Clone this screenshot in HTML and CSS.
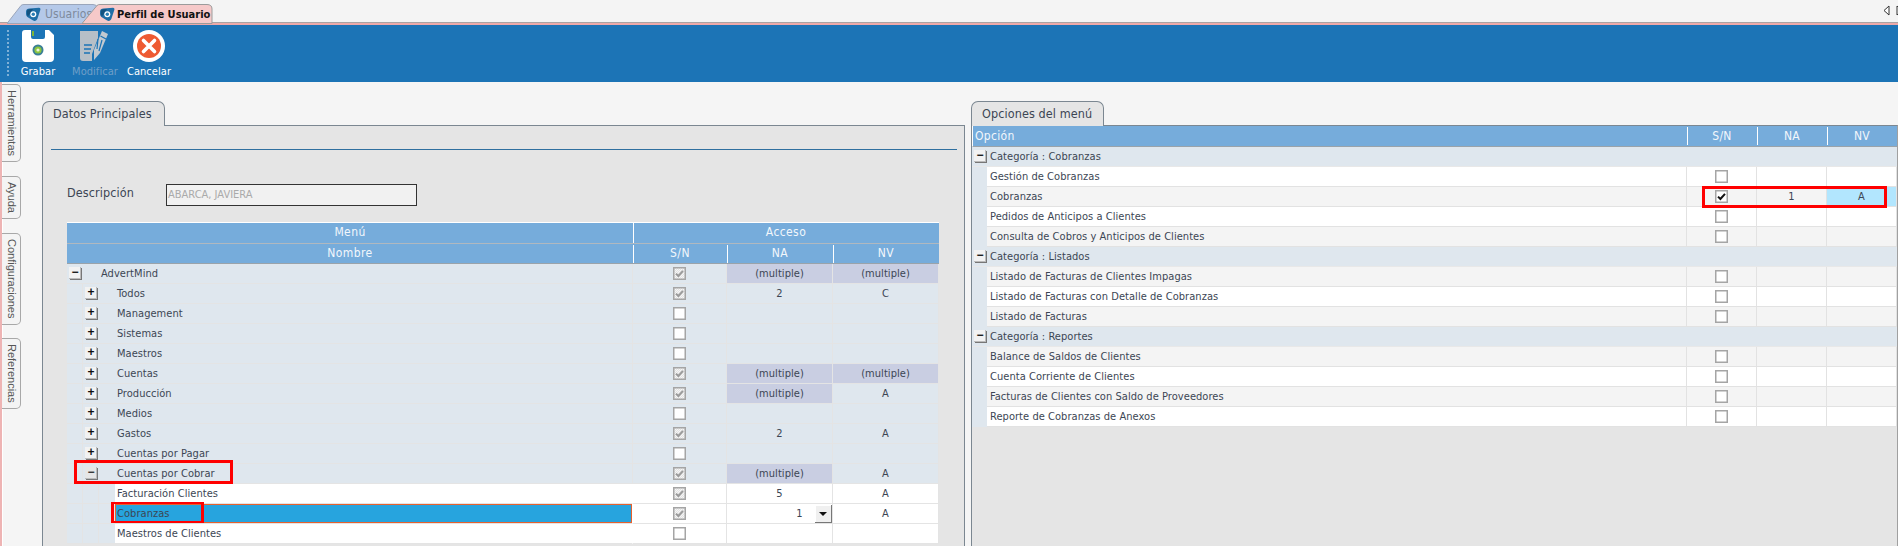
FILE: index.html
```html
<!DOCTYPE html>
<html lang="es">
<head>
<meta charset="utf-8">
<title>Perfil de Usuario</title>
<link rel="stylesheet" href="styles.css">
</head>
<body>
<svg class="defs" width="0" height="0" aria-hidden="true">
  <defs>
    <symbol id="logo" viewBox="0 0 16 15">
      <path d="M1 4.5C1 2.5 2.5 1.5 4.5 1.5L14 .8C15.2.8 15.8 1.8 15.3 3L12.5 11.5C11.8 13.6 10 14.6 8.2 13.6L2.8 10.2C1.6 9.4 1 8.2 1 6.8Z" fill="#1f6ea6"/>
      <path d="M2 4.5C2 3 3 2.3 4.5 2.2L8 2 3 9.5C2.3 9 2 8 2 6.8Z" fill="#13527f"/>
      <circle cx="8.3" cy="7.2" r="3" fill="#fff"/>
      <circle cx="8.3" cy="7.2" r="1.7" fill="#2b7fb5"/>
    </symbol>
    <symbol id="tick" viewBox="0 0 9 9">
      <path d="M1 4.6 3.4 7 8 1.8" fill="none" stroke="currentColor" stroke-width="2"/>
    </symbol>
  </defs>
</svg>

<header class="tabstrip">
  <div class="doc-tab doc-tab-back">
    <svg class="doc-tab-shape" viewBox="0 0 92 20" width="92" height="20"><path d="M0 19.5 14 1.5Q15 .5 17 .5H86Q90 .5 91 4V19.5Z" fill="#b5c9e9" stroke="#9aa6bb"/></svg>
    <svg class="doc-tab-logo" width="16" height="15"><use href="#logo"/></svg>
    <span class="doc-tab-text">Usuarios</span>
  </div>
  <div class="doc-tab doc-tab-front">
    <svg class="doc-tab-shape" viewBox="0 0 131 20" width="131" height="20"><path d="M0 19.5 15 1.5Q16 .5 18 .5H125Q130 .5 130 5V19.5Z" fill="#f6c9c9" stroke="#9b9b9b"/></svg>
    <svg class="doc-tab-logo" width="16" height="15"><use href="#logo"/></svg>
    <span class="doc-tab-text">Perfil de Usuario</span>
  </div>
  <div class="scrollers">
    <svg width="7" height="11" viewBox="0 0 7 11"><path d="M6 1 1 5.5 6 10Z" fill="#fff" stroke="#333"/></svg>
    <svg width="7" height="11" viewBox="0 0 7 11"><path d="M1 1 6 5.5 1 10Z" fill="#fff" stroke="#333"/></svg>
  </div>
</header>

<nav class="toolbar">
  <div class="grip"></div>
  <div class="tool tool-save">
    <svg width="32" height="32" viewBox="0 0 32 32">
      <path d="M3 0H9V7Q9 9 11 9H21Q23 9 23 7V0H27L32 5V28Q32 32 28 32H4Q0 32 0 28V3Q0 0 3 0Z" fill="#fff"/>
      <rect x="10" y="1" width="2" height="5" fill="#7bb33a"/>
      <circle cx="16" cy="20" r="5.5" fill="#3a7f96"/>
      <circle cx="16" cy="20" r="3.6" fill="#8dc63f"/>
      <circle cx="16" cy="20" r="1.6" fill="#e9f4d6"/>
    </svg>
    <span>Grabar</span>
  </div>
  <div class="tool tool-edit">
    <svg width="32" height="32" viewBox="0 0 32 32">
      <path d="M2 1H20V8L14 24V31H5Q2 31 2 28Z" fill="#b7bfc7"/>
      <path d="M6 15H14M6 19H13M6 23H12" stroke="#1c74b6" stroke-width="1.6"/>
      <path d="M24 1 30 4 22 23 16 30 16 20Z" fill="#c2c9d0"/>
      <path d="M22.5 6 28 9M20 9 19 19M24 10 21 21" stroke="#1c74b6" stroke-width="1.2" fill="none"/>
    </svg>
    <span>Modificar</span>
  </div>
  <div class="tool tool-cancel">
    <svg width="32" height="32" viewBox="0 0 32 32">
      <circle cx="16" cy="16" r="16" fill="#fff"/>
      <circle cx="16" cy="16" r="12" fill="#ee5a32"/>
      <path d="M10.5 10.5 21.5 21.5M21.5 10.5 10.5 21.5" stroke="#fff" stroke-width="3.6" stroke-linecap="round"/>
    </svg>
    <span>Cancelar</span>
  </div>
</nav>

<main class="workspace">
  <aside class="side">
    <div class="side-tab side-h">Herramientas</div>
    <div class="side-tab side-a">Ayuda</div>
    <div class="side-tab side-c">Configuraciones</div>
    <div class="side-tab side-r">Referencias</div>
  </aside>

  <section class="panel panel-left">
    <div class="panel-tab panel-tab-l">Datos Principales</div>
    <div class="panel-body panel-body-l">
      <div class="rule"></div>
      <div class="field">
        <label class="field-label">Descripción</label>
        <div class="field-input">ABARCA, JAVIERA</div>
      </div>
      <div class="tree">
        <div class="thead thead-top"><div class="th">Menú</div><div class="th th-span">Acceso</div></div>
        <div class="thead thead-sub"><div class="th">Nombre</div><div class="th th-sep">S/N</div><div class="th th-sep">NA</div><div class="th th-sep">NV</div></div>

        <div class="row"><div class="td name lv0"><span class="exp">−</span><span class="label">AdvertMind</span></div><div class="td ctr"><span class="cb dis"><svg width="9" height="9"><use href="#tick"/></svg></span></div><div class="td ctr multi">(multiple)</div><div class="td ctr multi">(multiple)</div></div>
        <div class="row"><div class="td name lv1"><span class="exp">+</span><span class="label">Todos</span></div><div class="td ctr"><span class="cb dis"><svg width="9" height="9"><use href="#tick"/></svg></span></div><div class="td ctr">2</div><div class="td ctr">C</div></div>
        <div class="row"><div class="td name lv1"><span class="exp">+</span><span class="label">Management</span></div><div class="td ctr"><span class="cb"></span></div><div class="td"></div><div class="td"></div></div>
        <div class="row"><div class="td name lv1"><span class="exp">+</span><span class="label">Sistemas</span></div><div class="td ctr"><span class="cb"></span></div><div class="td"></div><div class="td"></div></div>
        <div class="row"><div class="td name lv1"><span class="exp">+</span><span class="label">Maestros</span></div><div class="td ctr"><span class="cb"></span></div><div class="td"></div><div class="td"></div></div>
        <div class="row"><div class="td name lv1"><span class="exp">+</span><span class="label">Cuentas</span></div><div class="td ctr"><span class="cb dis"><svg width="9" height="9"><use href="#tick"/></svg></span></div><div class="td ctr multi">(multiple)</div><div class="td ctr multi">(multiple)</div></div>
        <div class="row"><div class="td name lv1"><span class="exp">+</span><span class="label">Producción</span></div><div class="td ctr"><span class="cb dis"><svg width="9" height="9"><use href="#tick"/></svg></span></div><div class="td ctr multi">(multiple)</div><div class="td ctr">A</div></div>
        <div class="row"><div class="td name lv1"><span class="exp">+</span><span class="label">Medios</span></div><div class="td ctr"><span class="cb"></span></div><div class="td"></div><div class="td"></div></div>
        <div class="row"><div class="td name lv1"><span class="exp">+</span><span class="label">Gastos</span></div><div class="td ctr"><span class="cb dis"><svg width="9" height="9"><use href="#tick"/></svg></span></div><div class="td ctr">2</div><div class="td ctr">A</div></div>
        <div class="row"><div class="td name lv1"><span class="exp">+</span><span class="label">Cuentas por Pagar</span></div><div class="td ctr"><span class="cb"></span></div><div class="td"></div><div class="td"></div></div>
        <div class="row"><div class="td name lv1"><span class="exp exp-dim">−</span><span class="label">Cuentas por Cobrar</span><i class="mark mark-cobrar"></i></div><div class="td ctr"><span class="cb dis"><svg width="9" height="9"><use href="#tick"/></svg></span></div><div class="td ctr multi">(multiple)</div><div class="td ctr">A</div></div>
        <div class="row row-leaf"><div class="td name lv2"><span class="leaf">Facturación Clientes</span></div><div class="td ctr"><span class="cb dis"><svg width="9" height="9"><use href="#tick"/></svg></span></div><div class="td ctr">5</div><div class="td ctr">A</div></div>
        <div class="row row-leaf"><div class="td name lv2"><span class="leaf leaf-sel">Cobranzas</span><i class="mark mark-cobranzas"></i></div><div class="td ctr"><span class="cb dis"><svg width="9" height="9"><use href="#tick"/></svg></span></div><div class="td ctr td-combo"><span class="combo-val">1</span><span class="combo-btn"></span></div><div class="td ctr">A</div></div>
        <div class="row row-leaf"><div class="td name lv2"><span class="leaf">Maestros de Clientes</span></div><div class="td ctr"><span class="cb"></span></div><div class="td"></div><div class="td"></div></div>
      </div>
    </div>
  </section>

  <section class="panel panel-right">
    <div class="panel-tab panel-tab-r">Opciones del menú</div>
    <div class="panel-body panel-body-r">
      <div class="opts">
        <div class="ohead"><div class="oth oth-name">Opción</div><div class="oth">S/N</div><div class="oth">NA</div><div class="oth">NV</div></div>

        <div class="ocat"><span class="exp exp-cat">−</span><span>Categoría : Cobranzas</span></div>
        <div class="orow"><div class="otd oname">Gestión de Cobranzas</div><div class="otd ctr"><span class="cb"></span></div><div class="otd"></div><div class="otd"></div></div>
        <div class="orow alt"><div class="otd oname">Cobranzas</div><div class="otd ctr"><span class="cb on"><svg width="9" height="9"><use href="#tick"/></svg></span></div><div class="otd ctr">1</div><div class="otd ctr nv-sel">A</div><i class="mark mark-opt"></i></div>
        <div class="orow"><div class="otd oname">Pedidos de Anticipos a Clientes</div><div class="otd ctr"><span class="cb"></span></div><div class="otd"></div><div class="otd"></div></div>
        <div class="orow alt"><div class="otd oname">Consulta de Cobros y Anticipos de Clientes</div><div class="otd ctr"><span class="cb"></span></div><div class="otd"></div><div class="otd"></div></div>

        <div class="ocat"><span class="exp exp-cat">−</span><span>Categoría : Listados</span></div>
        <div class="orow alt"><div class="otd oname">Listado de Facturas de Clientes Impagas</div><div class="otd ctr"><span class="cb"></span></div><div class="otd"></div><div class="otd"></div></div>
        <div class="orow"><div class="otd oname">Listado de Facturas con Detalle de Cobranzas</div><div class="otd ctr"><span class="cb"></span></div><div class="otd"></div><div class="otd"></div></div>
        <div class="orow alt"><div class="otd oname">Listado de Facturas</div><div class="otd ctr"><span class="cb"></span></div><div class="otd"></div><div class="otd"></div></div>

        <div class="ocat"><span class="exp exp-cat">−</span><span>Categoría : Reportes</span></div>
        <div class="orow alt"><div class="otd oname">Balance de Saldos de Clientes</div><div class="otd ctr"><span class="cb"></span></div><div class="otd"></div><div class="otd"></div></div>
        <div class="orow"><div class="otd oname">Cuenta Corriente de Clientes</div><div class="otd ctr"><span class="cb"></span></div><div class="otd"></div><div class="otd"></div></div>
        <div class="orow alt"><div class="otd oname">Facturas de Clientes con Saldo de Proveedores</div><div class="otd ctr"><span class="cb"></span></div><div class="otd"></div><div class="otd"></div></div>
        <div class="orow"><div class="otd oname">Reporte de Cobranzas de Anexos</div><div class="otd ctr"><span class="cb"></span></div><div class="otd"></div><div class="otd"></div></div>
      </div>
    </div>
  </section>
</main>
</body>
</html>
```
FILE: styles.css
```css
* { box-sizing: border-box; }
html, body { height: 546px; overflow: hidden; }
body {
  margin: 0;
  background: #f4f4f4;
  color: #3c4654;
  font: 11px/1 "DejaVu Sans Condensed", "DejaVu Sans", sans-serif;
  letter-spacing: .05px;
  display: flex;
  flex-direction: column;
}
.defs { position: absolute; }

/* document tabs */
.tabstrip {
  height: 25px;
  flex: none;
  display: flex;
  align-items: flex-start;
  padding: 4px 0 0 7px;
  background: #f4f4f4;
  border-bottom: 2px solid #eda9a9;
  box-shadow: inset 0 -1px 0 #a9a3a3;
  position: relative;
}
.doc-tab { position: relative; height: 20px; display: flex; align-items: center; }
.doc-tab-shape { position: absolute; left: 0; top: 0; }
.doc-tab-logo { position: relative; flex: none; }
.doc-tab-text { position: relative; white-space: nowrap; }
.doc-tab-back { width: 75px; padding-left: 18px; gap: 4px; color: #7e8a9c; font-size: 12px; }
.doc-tab-front { width: 131px; padding-left: 17px; gap: 2px; color: #111; font-size: 11px; font-weight: 700; letter-spacing: 0; }
.scrollers { position: absolute; right: -5px; top: 5px; display: flex; gap: 6px; }

/* toolbar */
.toolbar {
  height: 57px;
  flex: none;
  background: #1c74b6;
  display: flex;
  align-items: flex-start;
  padding: 5px 0 0 7px;
  position: relative;
}
.grip { width: 2px; height: 46px; background: repeating-linear-gradient(#7fb0d6 0 2px, transparent 2px 4px); }
.tool { display: flex; flex-direction: column; align-items: center; gap: 3px; color: #fff; font-size: 11px; }
.tool svg { display: block; }
.tool span { white-space: nowrap; line-height: 13px; }
.tool-save { width: 36px; margin-left: 11px; }
.tool-edit { width: 48px; margin-left: 15px; color: #6f9fc8; }
.tool-edit svg { margin-right: 3px; }
.tool-cancel { width: 44px; margin-left: 8px; }

/* workspace */
.workspace { flex: 1; display: flex; min-height: 0; position: relative; background: #f5f5f5; }
.side {
  width: 42px;
  flex: none;
  display: flex;
  flex-direction: column;
  padding-top: 2px;
  border-left: 2px solid #eeb4b4;
  box-shadow: inset 1px 0 0 #fff;
}
.side-tab {
  width: 19px;
  margin-left: 0;
  background: #f4f4f4;
  border: 1px solid #a8a8a8;
  border-left: 0;
  border-radius: 0 5px 5px 0;
  writing-mode: vertical-rl;
  font: 11px/17px "Liberation Sans", Arial, sans-serif;
  color: #555;
  letter-spacing: 0;
  text-align: center;
  white-space: nowrap;
}
.side-h { height: 78px; }
.side-a { height: 43px; margin-top: 14px; }
.side-c { height: 92px; margin-top: 14px; }
.side-r { height: 71px; margin-top: 13px; }

.panel { display: flex; flex-direction: column; padding-top: 19px; min-height: 0; }
.panel-left { width: 923px; flex: none; }
.panel-right { width: 927px; flex: none; margin-left: 6px; }
.panel-tab {
  height: 25px;
  background: #e5e5e5;
  border: 1px solid #7b8791;
  border-bottom: 0;
  border-radius: 7px 7px 0 0;
  font-size: 12.5px;
  line-height: 23px;
  padding-left: 10px;
  color: #3c4654;
  letter-spacing: .1px;
  position: relative;
  z-index: 1;
  flex: none;
}
.panel-tab-l { width: 123px; }
.panel-tab-r { width: 133px; }
.panel-body {
  flex: 1;
  margin-top: -1px;
  background: #e5e5e5;
  border: 1px solid #7b8791;
  border-bottom: 0;
}
.panel-body-l { padding: 23px 7px 0 8px; }
.panel-body-r { padding: 0; border-right-color: #a0a0a0; }
.rule { height: 1px; background: #2f6f9f; }

.field { display: flex; align-items: flex-start; padding: 34px 0 0 16px; height: 72px; }
.field-label { width: 99px; font-size: 12.5px; line-height: 17px; letter-spacing: .1px; }
.field-input {
  width: 251px;
  height: 22px;
  border: 1px solid #333;
  background: #f1f1f1;
  color: #aaa;
  font-size: 11px;
  letter-spacing: 0;
  line-height: 20px;
  padding-left: 1px;
  white-space: nowrap;
}

/* tree grid */
.tree { margin-left: 16px; width: 872px; }
.thead, .row { display: grid; grid-template-columns: 566px 94px 106px 106px; }
.thead { background: #76acdb; color: #f2f7fb; font-size: 12px; }
.thead-top { grid-template-columns: 566px 306px; height: 22px; border-top: 1px solid #fff; border-bottom: 1px solid #b0b8bf; }
.thead-sub { height: 20px; border-bottom: 1px solid #9aa3aa; }
.th { text-align: center; line-height: 19px; letter-spacing: .4px; box-shadow: inset 1px 0 0 #fff; }
.th:first-child { box-shadow: none; }
.th-sep { height: 18px; margin-top: 1px; line-height: 17px; }
.row { height: 20px; background: #dfe7ee; }
.td {
  height: 20px;
  border-right: 1px solid #e4e4e4;
  border-bottom: 1px solid #e4e4e4;
  line-height: 19px;
  white-space: nowrap;
  position: relative;
}
.td.ctr { display: flex; align-items: center; justify-content: center; padding-bottom: 1px; }
.multi { background: #c9cee2; }
.row-leaf .td:not(.name) { background: #fff; }
.name { display: flex; align-items: center; padding-bottom: 1px; }
.lv0 { padding-left: 2px; }
.lv0 .label { margin-left: 20px; }
.lv1 { padding-left: 18px; }
.lv1 .label { margin-left: 20px; }
.lv1::before { content: ""; position: absolute; left: 15px; top: 0; bottom: 0; border-left: 1px solid #e4e4e4; }
.lv2 { padding-left: 48px; border-right-color: #fff; }
.lv2::before { content: ""; position: absolute; left: 15px; top: 0; bottom: 0; border-left: 1px solid #e4e4e4; }
.lv2::after { content: ""; position: absolute; left: 31px; top: 0; bottom: 0; border-left: 1px solid #e4e4e4; }
.leaf { flex: 1; height: 19px; margin-top: 1px; background: #fff; padding-left: 2px; }
.leaf-sel { background: #27a4de; border: 1px solid #e8602c; padding-left: 1px; line-height: 17px; }

.exp {
  width: 12px;
  height: 12px;
  flex: none;
  background: #f2f2f2;
  box-shadow: 1px 1px 0 #777, inset -1px -1px 0 #bbb;
  color: #111;
  font: 700 12px/11px "Liberation Sans", sans-serif;
  text-align: center;
  letter-spacing: 0;
}
.exp-dim { color: #333; background: #e6e6e6; }
.exp-cat { margin-right: 4px; }

.cb { width: 13px; height: 13px; background: #fff; border: 1px solid #a5a5a5; box-shadow: inset 0 0 0 .5px #a5a5a5; display: flex; align-items: center; justify-content: center; }
.cb svg { display: block; width: 9px; height: 9px; }
.cb.dis { background: repeating-conic-gradient(#e2e2e2 0 25%, #f6f6f6 0 50%) 0 0 / 2px 2px; color: #9a9a9a; }
.cb.on { color: #111; }

.td-combo { justify-content: flex-start; padding-left: 40px; }
.combo-val { width: 10px; text-align: center; }
.combo-btn {
  position: absolute;
  right: 0;
  top: 1px;
  width: 17px;
  height: 18px;
  background: #f0f0f0;
  box-shadow: inset -1px -1px 0 #777, inset 1px 1px 0 #fff;
}
.combo-btn::after {
  content: "";
  position: absolute;
  left: 4px;
  top: 7px;
  border: 4px solid transparent;
  border-top: 4px solid #111;
  border-bottom: 0;
}

/* options grid */
.opts { width: 925px; }
.ohead, .orow { display: grid; position: relative; }
.ohead { grid-template-columns: 714px 70px 70px 70px; height: 21px; background: #76acdb; color: #f2f7fb; font-size: 12px; border-left: 1px solid #fff; border-bottom: 1px solid #9aa3aa; }
.oth { text-align: center; line-height: 18px; letter-spacing: .3px; height: 18px; margin-top: 1px; box-shadow: inset 1px 0 0 #fff; }
.oth-name { text-align: left; padding-left: 2px; box-shadow: none; }
.ocat {
  height: 20px;
  background: #dfe7ee;
  border-bottom: 1px solid #e8e8e8;
  display: flex;
  align-items: center;
  padding: 0 0 1px 2px;
  line-height: 19px;
}
.orow { height: 20px; background: #fff; border-left: 15px solid #dfe7ee; grid-template-columns: 700px 70px 70px 70px; }
.orow.alt { background: #f4f4f4; }
.otd { height: 20px; border-right: 1px solid #e2e2e2; border-bottom: 1px solid #e2e2e2; line-height: 19px; white-space: nowrap; }
.otd.ctr { display: flex; align-items: center; justify-content: center; padding-bottom: 1px; }
.oname { padding-left: 3px; }
.nv-sel { background: #b2e6fe; }

/* red annotation boxes over the grids */
.mark { position: absolute; border: 3px solid #f00; pointer-events: none; z-index: 2; }
.mark-cobrar { left: 7px; top: -4px; width: 159px; height: 24px; }
.mark-cobranzas { left: 44px; top: -2px; width: 93px; height: 21px; border-width: 2px 3px; }
.mark-opt { left: 715px; top: -1px; width: 185px; height: 22px; }
```
